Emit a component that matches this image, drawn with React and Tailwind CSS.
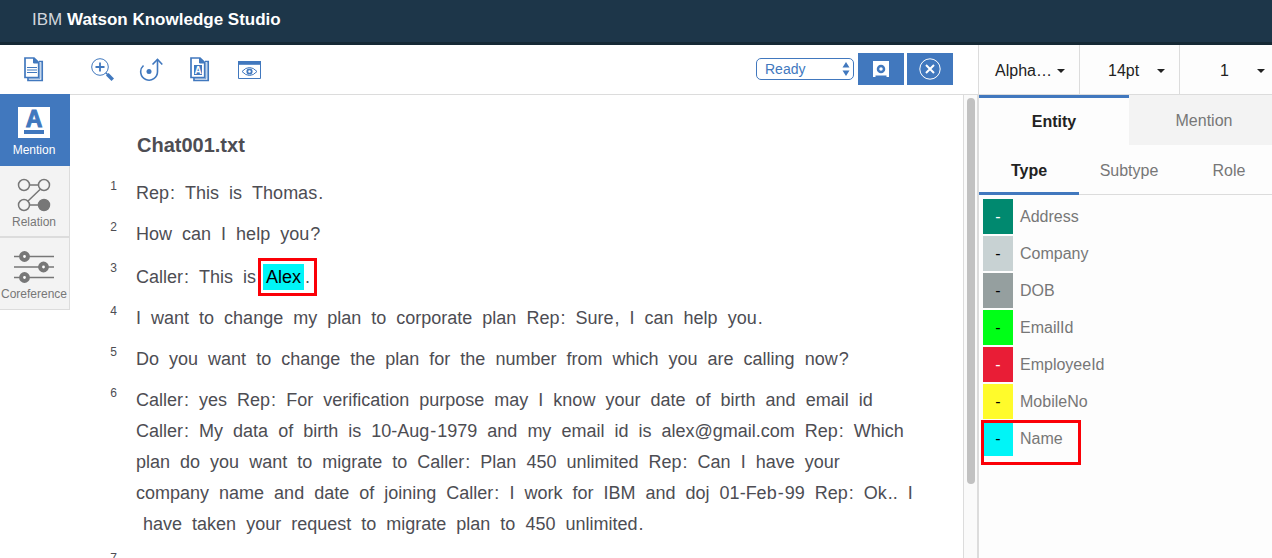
import React from "react";

const C = "#4178be";

// "|" separates tokens inside a word, "*" marks an annotated mention, "~" an indented token.
const sentences = [
  ["Rep|: This is Thomas|."],
  ["How can I help you|?"],
  ["Caller|: This is *Alex|."],
  ["I want to change my plan to corporate plan Rep|: Sure|, I can help you|."],
  ["Do you want to change the plan for the number from which you are calling now|?"],
  [
    "Caller|: yes Rep|: For verification purpose may I know your date of birth and email id",
    "Caller|: My data of birth is 10-Aug|-|1979 and my email id is alex@gmail.com Rep|: Which",
    "plan do you want to migrate to Caller|: Plan 450 unlimited Rep|: Can I have your",
    "company name and date of joining Caller|: I work for IBM and doj 01-Feb|-|99 Rep|: Ok|.. I",
    "~have taken your request to migrate plan to 450 unlimited|.",
  ],
  ["You will receive an update today|."],
];

const types = [
  { name: "Address", swatch: "bg-[#00896f] text-white" },
  { name: "Company", swatch: "bg-[#c8d2d3] text-black" },
  { name: "DOB", swatch: "bg-[#959f9f] text-black" },
  { name: "EmailId", swatch: "bg-[#00ff17] text-black" },
  { name: "EmployeeId", swatch: "bg-[#e91d36] text-white" },
  { name: "MobileNo", swatch: "bg-[#fffb2b] text-black" },
  { name: "Name", swatch: "bg-[#00f5f7] text-black", marked: true },
];

function Word({ text }) {
  const parts = text.split("|");
  if (text.startsWith("*")) {
    return (
      <span className="-my-1 -ml-2 inline-flex h-[38px] items-center border-3 border-[#fb0007] pl-[2px] pr-1">
        <mark className="bg-[#00f5f7] px-[3px] leading-[26px] text-black">{parts[0].slice(1)}</mark>
        <span className="pl-px">{parts[1]}</span>
      </span>
    );
  }
  return (
    <span className={text.startsWith("~") ? "pl-[7px]" : ""}>
      {parts.map((p, i) => (
        <span key={i} className={i ? "pl-px" : ""}>{p.replace("~", "")}</span>
      ))}
    </span>
  );
}

function Line({ text }) {
  return (
    <span className="block whitespace-nowrap">
      {text.split(" ").map((w, i) => (
        <React.Fragment key={i}>
          {i > 0 && <span className="pr-[5px]"> </span>}
          <Word text={w} />
        </React.Fragment>
      ))}
    </span>
  );
}

function PageStack({ children }) {
  return (
    <svg width="20" height="25" viewBox="0 0 20 25" fill="none" stroke={C}>
      <path d="M15 4.500h3.200v19H4V21" strokeWidth="1.700" />
      <path d="M16 6v15.700H5" strokeWidth="0.600" />
      <path d="M1 1h9l4.700 4.700V20.500H1z" fill="#fff" strokeWidth="1.700" />
      <path d="M9.500 1l5 5h-5z" fill={C} />
      {children}
    </svg>
  );
}

function DocsIcon() {
  return (
    <PageStack>
      <path d="M3 10.500h10M3 13h10M3 15.500h10" strokeWidth="1.200" />
    </PageStack>
  );
}

function DictionaryIcon() {
  return (
    <PageStack>
      <path d="M4 8h8v10H4z" fill={C} stroke="none" />
      <text x="8" y="16.500" textAnchor="middle" fontSize="10" fontWeight="bold" fill="#fff" stroke="none">A</text>
    </PageStack>
  );
}

function ZoomIcon() {
  return (
    <svg width="24" height="24" viewBox="0 0 24 24" fill="none" stroke={C}>
      <circle cx="10" cy="9" r="8.300" />
      <path d="M5.500 9h9M10 4.500v9" strokeWidth="1.800" />
      <path d="M15.800 14.800l2 2" strokeWidth="1.500" />
      <path d="M17.300 16.300l5.500 5.500" strokeWidth="3.600" />
    </svg>
  );
}

function RotateIcon() {
  return (
    <svg width="24" height="24" viewBox="0 0 24 24" fill="none" stroke={C} strokeWidth="1.600">
      <path d="M4.500 7.500a8.400 8.400 0 1 0 14 6V1.500" />
      <path d="M13.500 6.500l5-5 4.800 5" />
      <circle cx="10" cy="13.500" r="2.500" fill={C} stroke="none" />
    </svg>
  );
}

function PreviewIcon() {
  return (
    <svg width="24" height="20" viewBox="0 0 24 20" fill="none" stroke={C}>
      <path d="M1.500 1.500h22v17h-22z" />
      <path d="M1 1h23v3.800H1z" fill={C} stroke="none" />
      <path d="M5 11.500q7.500-8 15 0q-7.500 8-15 0z" />
      <circle cx="12.500" cy="11.500" r="2.200" strokeWidth="1.800" />
    </svg>
  );
}

function RelationIcon() {
  return (
    <svg width="34" height="34" viewBox="0 0 34 34" fill="none" stroke="#777" strokeWidth="1.500">
      <path d="M13 7h8M13 27h8M23 11.500L11 23" />
      <circle cx="7" cy="7" r="5.500" />
      <circle cx="27" cy="7" r="5.500" />
      <circle cx="7" cy="27" r="5.500" />
      <circle cx="27" cy="27" r="5.500" fill="#777" />
    </svg>
  );
}

function CoreferenceIcon() {
  return (
    <svg width="40" height="34" viewBox="0 0 40 34" fill="none" stroke="#777" strokeWidth="1.500">
      <path d="M0 6.500h40M0 17h40M0 27.500h40" />
      {[[10.5, 6.5], [29.5, 17], [10.5, 27.5]].map(([x, y]) => (
        <circle key={y} cx={x} cy={y} r="3.400" fill="#fff" strokeWidth="4" />
      ))}
    </svg>
  );
}

function Caret() {
  return (
    <svg className="shrink-0" width="8" height="4" viewBox="0 0 8 4" fill="#222">
      <path d="M0 0h8L4 4z" />
    </svg>
  );
}

function ToolButton({ label, children }) {
  return (
    <button type="button" aria-label={label} className="flex size-6 items-center justify-center">
      {children}
    </button>
  );
}

export default function App() {
  return (
    <div className="flex h-screen flex-col overflow-hidden bg-white font-['Liberation_Sans',sans-serif] text-base text-[#777]">
      <header className="flex h-[45px] shrink-0 items-center border-b-3 border-[#152935] bg-[#1d3649] px-8 pb-0.5 text-white">
        <h1 className="text-[17px]">
          <span className="text-gray-300">IBM</span> <span className="font-bold">Watson Knowledge Studio</span>
        </h1>
      </header>

      <div className="flex min-h-0 flex-1">
        <div className="flex min-w-0 flex-1 flex-col">
          <div className="flex h-[50px] shrink-0 items-center border-b border-[#dcdcdc] pl-[22px] pr-[25px]">
            <ToolButton label="Documents"><DocsIcon /></ToolButton>
            <div className="ml-11 flex gap-[25px]">
              <ToolButton label="Zoom in"><ZoomIcon /></ToolButton>
              <ToolButton label="Rotate"><RotateIcon /></ToolButton>
              <ToolButton label="Dictionary"><DictionaryIcon /></ToolButton>
              <ToolButton label="Preview"><PreviewIcon /></ToolButton>
            </div>
            <div className="mb-0.5 ml-auto flex items-center gap-[3px]">
              <div className="relative mr-px">
                <select aria-label="Status" className="block h-[22px] w-[98px] appearance-none rounded-[5px] border border-[#4178be] bg-white pl-2 text-sm leading-5 text-[#4178be]">
                  <option>Ready</option>
                </select>
                <svg className="pointer-events-none absolute right-1 top-1" width="8" height="14" viewBox="0 0 8 14" fill={C}>
                  <path d="M4 0l3.500 5.500h-7zM4 14L.5 8.500h7z" />
                </svg>
              </div>
              <button type="button" aria-label="Save" className="flex h-8 w-[46px] items-center justify-center bg-[#4178be]">
                <svg width="18" height="18" viewBox="0 0 18 18" fill="none">
                  <path d="M1 1h16v16h-2.500v-1.500h-11V17H1z" fill="#fff" />
                  <circle cx="9" cy="9" r="3" stroke={C} strokeWidth="2.500" />
                </svg>
              </button>
              <button type="button" aria-label="Close" className="flex h-8 w-[46px] items-center justify-center bg-[#4178be]">
                <svg width="22" height="22" viewBox="0 0 22 22" fill="none" stroke="#fff">
                  <circle cx="11" cy="11" r="10.200" />
                  <path d="M7 7l8 8M15 7l-8 8" strokeWidth="2" />
                </svg>
              </button>
            </div>
          </div>

          <div className="flex min-h-0 flex-1">
            <nav className="w-[70px] shrink-0 text-xs">
              <button type="button" className="-mt-px flex h-[72px] w-full flex-col items-center bg-[#4178be] pt-[13px] pr-0.5 text-white">
                <svg width="32" height="31" viewBox="0 0 32 31">
                  <path d="M0 0h32v31H0z" fill="#fff" />
                  <text x="16" y="20" textAnchor="middle" fontSize="23" fontWeight="bold" fill={C} stroke={C}>A</text>
                  <path d="M6 23h20v4H6z" fill={C} />
                </svg>
                <span className="mt-1 leading-4">Mention</span>
              </button>
              <button type="button" className="flex h-[72px] w-full flex-col items-center border-r border-b-2 border-[#dcdcdc] bg-[#f3f3f3] pt-3 pr-px">
                <RelationIcon />
                <span className="mt-0.5 leading-4">Relation</span>
              </button>
              <button type="button" className="flex h-[72px] w-full flex-col items-center border-r border-b border-[#dcdcdc] bg-[#f3f3f3] pt-3 pr-px">
                <CoreferenceIcon />
                <span className="mt-0.5 leading-4">Coreference</span>
              </button>
            </nav>

            <main className="min-w-0 flex-1 overflow-hidden pl-9 pt-9 text-lg text-[#4d4d53]">
              <h2 className="mb-[19px] ml-[31px] text-xl leading-7 font-bold">Chat001.txt</h2>
              <ol className="flex flex-col gap-[10px]">
                {sentences.map((lines, i) => (
                  <li key={i} className="flex items-start leading-[31px]">
                    <span className="-mt-1 w-[11px] shrink-0 text-right text-xs leading-6">{i + 1}</span>
                    <p className={lines[0].includes("*") ? "pl-[19px] pt-[2px]" : "pl-[19px]"}>
                      {lines.map((l) => <Line key={l} text={l} />)}
                    </p>
                  </li>
                ))}
              </ol>
            </main>

            <div className="w-[15px] shrink-0 border-x border-[#dcdcdc] bg-[#fafafa] px-[3px] pt-[3px]">
              <div className="h-[84%] w-2 rounded-full bg-[#c1c1c1]" />
            </div>
          </div>
        </div>

        <aside className="flex w-[294px] shrink-0 flex-col overflow-hidden border-l border-[#dcdcdc] bg-[#fdfdfd]">
          <div className="flex h-[50px] shrink-0 border-b border-[#dcdcdc] text-[#222]">
            <button type="button" className="flex w-[101px] items-center justify-between border-r border-[#dcdcdc] pt-0.5 pl-4 pr-[14px]">
              Alpha… <Caret />
            </button>
            <button type="button" className="flex w-[100px] items-center justify-between border-r border-[#dcdcdc] pt-0.5 pl-7 pr-[14px]">
              14pt <Caret />
            </button>
            <button type="button" className="flex flex-1 items-center justify-between pt-0.5 pl-10 pr-[7px]">
              1 <Caret />
            </button>
          </div>
          <div role="tablist" className="flex h-[50px] shrink-0">
            <button type="button" role="tab" aria-selected="true" className="w-[150px] shrink-0 border-t-3 border-[#4178be] font-bold text-[#222]">Entity</button>
            <button type="button" role="tab" aria-selected="false" className="w-[150px] shrink-0 bg-[#f3f3f3] pt-0.5">Mention</button>
          </div>
          <div role="tablist" className="flex h-[50px] shrink-0">
            <button type="button" role="tab" aria-selected="true" className="w-[100px] shrink-0 border-b-3 border-[#4178be] pt-1 font-bold text-[#222]">Type</button>
            <button type="button" role="tab" aria-selected="false" className="w-[100px] shrink-0 border-b border-[#dcdcdc] pt-0.5">Subtype</button>
            <button type="button" role="tab" aria-selected="false" className="w-[100px] shrink-0 border-b border-[#dcdcdc] pt-0.5">Role</button>
          </div>
          <ul className="flex flex-col gap-[2px] pl-1 pt-1">
            {types.map((t) => (
              <li key={t.name} className="relative flex items-center gap-[7px]">
                <span className={"flex h-[35px] w-[30px] items-center justify-center " + t.swatch}>-</span>
                {t.name}
                {t.marked && <span className="absolute -left-[2px] -top-px h-[45px] w-[100px] border-3 border-[#fb0007]" />}
              </li>
            ))}
          </ul>
        </aside>
      </div>
    </div>
  );
}
